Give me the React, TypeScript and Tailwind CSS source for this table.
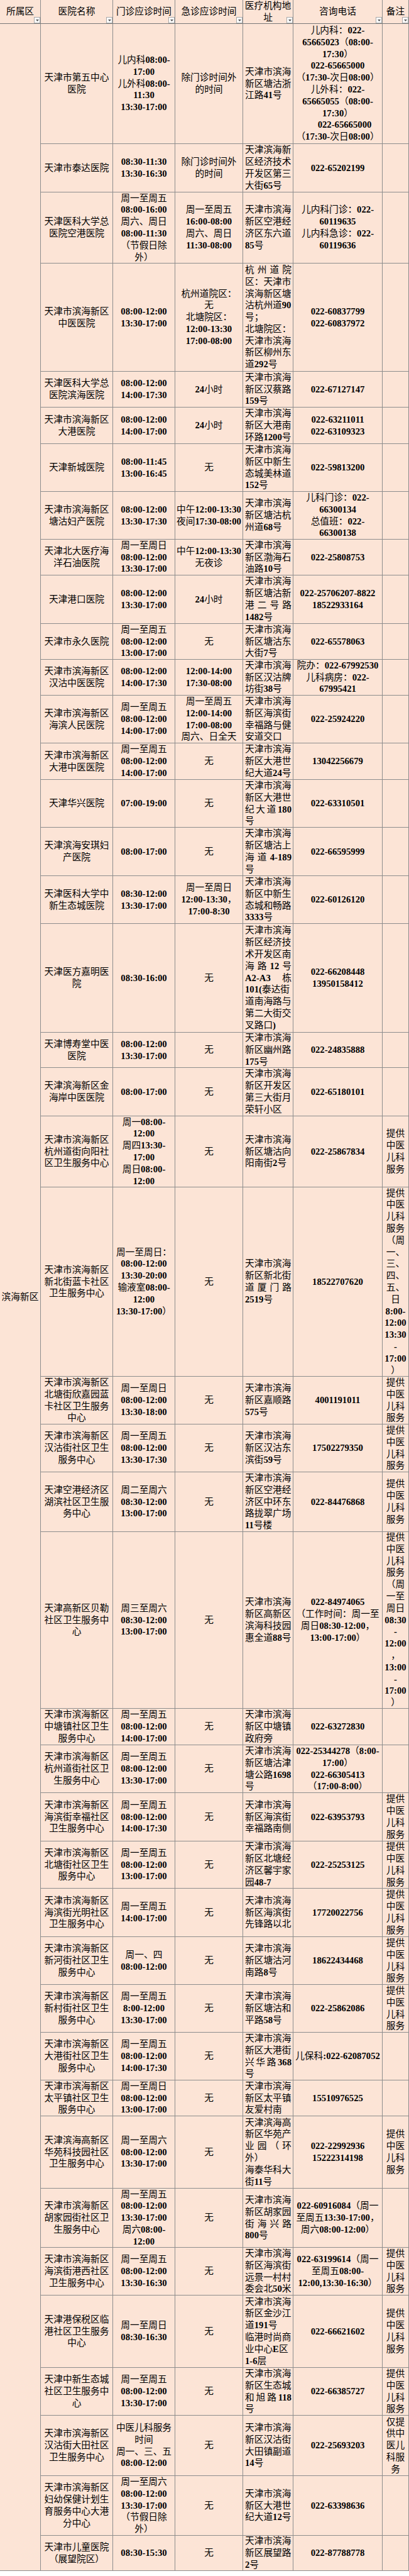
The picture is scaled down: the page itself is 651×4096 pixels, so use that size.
import React from "react";

type Row = {
  h: string;
  name: string[];
  op: string[];
  em: string[];
  addr: string[];
  tel: string[];
  note?: string[];
};

const TCM = ["提供", "中医", "儿科", "服务"];

const rows: Row[] = [
  {
    h: "h-[191px]",
    name: ["天津市第五中心", "医院"],
    op: ["儿内科08:00-", "17:00", "儿外科08:00-", "11:30", "13:30-17:00"],
    em: ["除门诊时间外", "的时间"],
    addr: ["天津市滨海", "新区塘沽浙", "江路41号"],
    tel: ["儿内科：022-", "65665023（08:00-", "17:30）", "022-65665000", "（17:30-次日08:00）", "儿外科：022-", "65665055（08:00-", "17:30）", "~022-65665000", "（17:30-次日08:00）"],
  },
  {
    h: "h-[77px]",
    name: ["天津市泰达医院"],
    op: ["08:30-11:30", "13:30-16:30"],
    em: ["除门诊时间外", "的时间"],
    addr: ["天津滨海新", "区经济技术", "开发区第三", "大街65号"],
    tel: ["022-65202199"],
  },
  {
    h: "h-[113px]",
    name: ["天津医科大学总", "医院空港医院"],
    op: ["周一至周五", "08:00-16:00", "周六、周日", "08:00-11:30", "（节假日除", "外）"],
    em: ["周一至周五", "16:00-08:00", "周六、周日", "11:30-08:00"],
    addr: ["天津市滨海", "新区空港经", "济区东六道", "85号"],
    tel: ["儿内科门诊：022-", "60119635", "儿内科急诊：022-", "60119636"],
  },
  {
    h: "h-[172px]",
    name: ["天津市滨海新区", "中医医院"],
    op: ["08:00-12:00", "13:30-17:00"],
    em: ["杭州道院区：", "无", "北塘院区：", "12:00-13:30", "17:00-08:00"],
    addr: ["杭|州|道|院", "区：天津市", "滨海新区塘", "沽杭州道90", "号；", "北塘院区：", "天津市滨海", "新区柳州东", "道292号"],
    tel: ["022-60837799", "022-60837972"],
  },
  {
    h: "h-[57px]",
    name: ["天津医科大学总", "医院滨海医院"],
    op: ["08:00-12:00", "14:00-17:30"],
    em: ["24小时"],
    addr: ["天津市滨海", "新区汉蔡路", "159号"],
    tel: ["022-67127147"],
  },
  {
    h: "h-[58px]",
    name: ["天津市滨海新区", "大港医院"],
    op: ["08:00-12:00", "14:00-17:00"],
    em: ["24小时"],
    addr: ["天津市滨海", "新区大港南", "环路1200号"],
    tel: ["022-63211011", "022-63109323"],
  },
  {
    h: "h-[76px]",
    name: ["天津新城医院"],
    op: ["08:00-11:45", "13:00-16:45"],
    em: ["无"],
    addr: ["天津市滨海", "新区中新生", "态城美林道", "152号"],
    tel: ["022-59813200"],
  },
  {
    h: "h-[76px]",
    name: ["天津市滨海新区", "塘沽妇产医院"],
    op: ["08:00-12:00", "13:30-17:30"],
    em: ["中午12:00-13:30", "夜间17:30-08:00"],
    addr: ["天津市滨海", "新区塘沽杭", "州道68号"],
    tel: ["儿科门诊：022-", "66300134", "总值班：022-", "66300138"],
  },
  {
    h: "h-[57px]",
    name: ["天津北大医疗海", "洋石油医院"],
    op: ["周一至周日", "08:00-12:00", "13:30-17:00"],
    em: ["中午12:00-13:30", "无夜诊"],
    addr: ["天津市滨海", "新区渤海石", "油路10号"],
    tel: ["022-25808753"],
  },
  {
    h: "h-[77px]",
    name: ["天津港口医院"],
    op: ["08:00-12:00", "13:30-17:00"],
    em: ["24小时"],
    addr: ["天津市滨海", "新区塘沽新", "港|二|号|路", "1482号"],
    tel: ["022-25706207-8822", "18522933164"],
  },
  {
    h: "h-[57px]",
    name: ["天津市永久医院"],
    op: ["周一至周五", "08:00-12:00", "13:00-17:00"],
    em: ["无"],
    addr: ["天津市滨海", "新区塘沽东", "大街7号"],
    tel: ["022-65578063"],
  },
  {
    h: "h-[57px]",
    name: ["天津市滨海新区", "汉沽中医医院"],
    op: ["08:00-12:00", "14:00-17:30"],
    em: ["12:00-14:00", "17:30-08:00"],
    addr: ["天津市滨海", "新区汉沽牌", "坊街38号"],
    tel: ["院办：022-67992530", "儿科病房：022-", "67995421"],
  },
  {
    h: "h-[76px]",
    name: ["天津市滨海新区", "海滨人民医院"],
    op: ["周一至周五", "08:00-12:00", "14:00-17:00"],
    em: ["周一至周五", "12:00-14:00", "17:00-08:00", "周六、日全天"],
    addr: ["天津市滨海", "新区海滨街", "幸福路与健", "安道交口"],
    tel: ["022-25924220"],
  },
  {
    h: "h-[58px]",
    name: ["天津市滨海新区", "大港中医医院"],
    op: ["周一至周五", "08:00-12:00", "14:00-17:00"],
    em: ["无"],
    addr: ["天津市滨海", "新区大港世", "纪大道24号"],
    tel: ["13042256679"],
  },
  {
    h: "h-[76px]",
    name: ["天津华兴医院"],
    op: ["07:00-19:00"],
    em: ["无"],
    addr: ["天津市滨海", "新区大港世", "纪|大|道|180", "号"],
    tel: ["022-63310501"],
  },
  {
    h: "h-[77px]",
    name: ["天津滨海安琪妇", "产医院"],
    op: ["08:00-17:00"],
    em: ["无"],
    addr: ["天津市滨海", "新区塘沽上", "海|道|4-189", "号"],
    tel: ["022-66595999"],
  },
  {
    h: "h-[76px]",
    name: ["天津医科大学中", "新生态城医院"],
    op: ["08:30-12:00", "13:30-17:00"],
    em: ["周一至周日", "12:00-13:30，", "17:00-8:30"],
    addr: ["天津市滨海", "新区中新生", "态城和畅路", "3333号"],
    tel: ["022-60126120"],
  },
  {
    h: "h-[173px]",
    name: ["天津医方嘉明医", "院"],
    op: ["08:30-16:00"],
    em: ["无"],
    addr: ["天津市滨海", "新区经济技", "术开发区南", "海|路|12|号", "A2-A3|栋", "101(泰达街", "道南海路与", "第二大街交", "叉路口)"],
    tel: ["022-66208448", "13950158412"],
  },
  {
    h: "h-[56px]",
    name: ["天津博寿堂中医", "医院"],
    op: ["08:00-12:00", "13:30-17:00"],
    em: ["无"],
    addr: ["天津市滨海", "新区幽州路", "175号"],
    tel: ["022-24835888"],
  },
  {
    h: "h-[77px]",
    name: ["天津滨海新区金", "海岸中医医院"],
    op: ["08:00-17:00"],
    em: ["无"],
    addr: ["天津市滨海", "新区开发区", "第三大街月", "荣轩小区"],
    tel: ["022-65180101"],
  },
  {
    h: "h-[113px]",
    name: ["天津市滨海新区", "杭州道街向阳社", "区卫生服务中心"],
    op: ["周一08:00-", "12:00", "周四13:30-", "17:00", "周日08:00-", "12:00"],
    em: ["无"],
    addr: ["天津市滨海", "新区塘沽向", "阳南街2号"],
    tel: ["022-25867834"],
    note: TCM,
  },
  {
    h: "h-[301px]",
    name: ["天津市滨海新区", "新北街蓝卡社区", "卫生服务中心"],
    op: ["周一至周日：", "08:00-12:00", "13:30-20:00", "输液室08:00-", "12:00", "13:30-17:00）"],
    em: ["无"],
    addr: ["天津市滨海", "新区新北街", "道|厦|门|路", "2519号"],
    tel: ["18522707620"],
    note: ["提供", "中医", "儿科", "服务", "（周", "一、", "三、", "四、", "五、", "日", "8:00-", "12:00", "13:30", "-", "17:00", "）"],
  },
  {
    h: "h-[76px]",
    name: ["天津市滨海新区", "北塘街欣嘉园蓝", "卡社区卫生服务", "中心"],
    op: ["周一至周日", "08:00-12:00", "13:30-18:00"],
    em: ["无"],
    addr: ["天津市滨海", "新区嘉顺路", "575号"],
    tel: ["4001191011"],
    note: TCM,
  },
  {
    h: "h-[76px]",
    name: ["天津市滨海新区", "汉沽街社区卫生", "服务中心"],
    op: ["周一至周五", "08:00-12:00", "13:30-17:30"],
    em: ["无"],
    addr: ["天津市滨海", "新区汉沽东", "滨街59号"],
    tel: ["17502279350"],
    note: TCM,
  },
  {
    h: "h-[95px]",
    name: ["天津空港经济区", "湖滨社区卫生服", "务中心"],
    op: ["周二至周六", "08:30-12:00", "13:00-17:00"],
    em: ["无"],
    addr: ["天津市滨海", "新区空港经", "济区中环东", "路拢翠广场", "11号楼"],
    tel: ["022-84476868"],
    note: TCM,
  },
  {
    h: "h-[281px]",
    name: ["天津高新区贝勒", "社区卫生服务中", "心"],
    op: ["周三至周六", "08:30-12:00", "13:00-17:00"],
    em: ["无"],
    addr: ["天津市滨海", "新区高新区", "滨海科技园", "惠全道88号"],
    tel: ["022-84974065", "（工作时间：周一至", "周日08:30-12:00，", "13:00-17:00）"],
    note: ["提供", "中医", "儿科", "服务", "（周", "一至", "周日", "08:30", "-", "12:00", "，", "13:00", "-", "17:00", "）"],
  },
  {
    h: "h-[58px]",
    name: ["天津市滨海新区", "中塘镇社区卫生", "服务中心"],
    op: ["周一至周五", "08:00-12:00", "14:00-17:00"],
    em: ["无"],
    addr: ["天津市滨海", "新区中塘镇", "政府旁"],
    tel: ["022-63272830"],
  },
  {
    h: "h-[76px]",
    name: ["天津市滨海新区", "杭州道街社区卫", "生服务中心"],
    op: ["周一至周五", "08:00-12:00", "13:30-17:00"],
    em: ["无"],
    addr: ["天津市滨海", "新区塘沽津", "塘公路1698", "号"],
    tel: ["022-25344278（8:00-", "17:00）", "022-66305413", "（17:00-8:00）"],
  },
  {
    h: "h-[77px]",
    name: ["天津市滨海新区", "海滨街幸福社区", "卫生服务中心"],
    op: ["周一至周五", "08:00-12:00", "14:00-17:30"],
    em: ["无"],
    addr: ["天津市滨海", "新区海滨街", "幸福路南侧"],
    tel: ["022-63953793"],
    note: TCM,
  },
  {
    h: "h-[75px]",
    name: ["天津市滨海新区", "北塘街社区卫生", "服务中心"],
    op: ["周一至周五", "08:00-12:00", "13:00-17:00"],
    em: ["无"],
    addr: ["天津市滨海", "新区北塘经", "济区馨宇家", "园48-7"],
    tel: ["022-25253125"],
    note: TCM,
  },
  {
    h: "h-[77px]",
    name: ["天津市滨海新区", "海滨街光明社区", "卫生服务中心"],
    op: ["周一至周五", "14:00-17:00"],
    em: ["无"],
    addr: ["天津市滨海", "新区海滨街", "先锋路以北"],
    tel: ["17720022756"],
    note: TCM,
  },
  {
    h: "h-[76px]",
    name: ["天津市滨海新区", "新河街社区卫生", "服务中心"],
    op: ["周一、四", "08:00-12:00"],
    em: ["无"],
    addr: ["天津市滨海", "新区塘沽河", "南路8号"],
    tel: ["18622434468"],
    note: TCM,
  },
  {
    h: "h-[76px]",
    name: ["天津市滨海新区", "新村街社区卫生", "服务中心"],
    op: ["周一至周五", "8:00-12:00", "13:30-17:00"],
    em: ["无"],
    addr: ["天津市滨海", "新区塘沽和", "平路58号"],
    tel: ["022-25862086"],
    note: TCM,
  },
  {
    h: "h-[76px]",
    name: ["天津市滨海新区", "大港街社区卫生", "服务中心"],
    op: ["周一至周五", "08:00-12:00", "14:00-17:30"],
    em: ["无"],
    addr: ["天津市滨海", "新区大港街", "兴|华|路|368", "号"],
    tel: ["儿保科:022-62087052"],
  },
  {
    h: "h-[57px]",
    name: ["天津市滨海新区", "太平镇社区卫生", "服务中心"],
    op: ["周一至周日", "08:00-12:00", "13:00-17:00"],
    em: ["无"],
    addr: ["天津市滨海", "新区太平镇", "友爱村南"],
    tel: ["15510976525"],
  },
  {
    h: "h-[115px]",
    name: ["天津滨海高新区", "华苑科技园社区", "卫生服务中心"],
    op: ["周一至周六", "08:00-12:00", "13:30-17:00"],
    em: ["无"],
    addr: ["天津滨海高", "新区华苑产", "业|园|（|环", "外）", "海泰华科大", "街11号"],
    tel: ["022-22992936", "15222314198"],
    note: TCM,
  },
  {
    h: "h-[94px]",
    name: ["天津市滨海新区", "胡家园街社区卫", "生服务中心"],
    op: ["周一至周五", "08:00-12:00", "13:30-17:00", "周六08:00-", "12:00"],
    em: ["无"],
    addr: ["天津市滨海", "新区胡家园", "街|海|兴|路", "800号"],
    tel: ["022-60916084（周一", "至周五13:30-17:00，", "周六08:00-12:00）"],
  },
  {
    h: "h-[76px]",
    name: ["天津市滨海新区", "海滨街港西社区", "卫生服务中心"],
    op: ["周一至周五", "08:00-12:00", "13:30-16:30"],
    em: ["无"],
    addr: ["天津市滨海", "新区海滨街", "远景一村村", "委会北50米"],
    tel: ["022-63199614（周一", "至周五08:00-", "12:00,13:30-16:30）"],
    note: TCM,
  },
  {
    h: "h-[115px]",
    name: ["天津港保税区临", "港社区卫生服务", "中心"],
    op: ["周一至周日", "08:30-16:30"],
    em: ["无"],
    addr: ["天津市滨海", "新区金沙江", "道191号", "临港时尚商", "业中心E区", "1-6层"],
    tel: ["022-66621602"],
    note: TCM,
  },
  {
    h: "h-[76px]",
    name: ["天津中新生态城", "社区卫生服务中", "心"],
    op: ["周一至周五", "08:00-12:00", "13:30-17:00"],
    em: ["无"],
    addr: ["天津市滨海", "新区生态城", "和|旭|路|118", "号"],
    tel: ["022-66385727"],
    note: TCM,
  },
  {
    h: "h-[96px]",
    name: ["天津市滨海新区", "汉沽街大田社区", "卫生服务中心"],
    op: ["中医儿科服务", "时间", "周一、三、五", "08:00-12:00"],
    em: ["无"],
    addr: ["天津市滨海", "新区汉沽街", "大田镇副道", "14号"],
    tel: ["022-25693203"],
    note: ["仅提", "供中", "医儿", "科服", "务"],
  },
  {
    h: "h-[95px]",
    name: ["天津市滨海新区", "妇幼保健计划生", "育服务中心大港", "分中心"],
    op: ["周一至周六", "08:00-12:00", "13:30-17:00", "（节假日除", "外）"],
    em: ["无"],
    addr: ["天津市滨海", "新区大港世", "纪大道12号"],
    tel: ["022-63398636"],
  },
  {
    h: "h-[56px]",
    name: ["天津市儿童医院", "（展望院区）"],
    op: ["08:30-15:30"],
    em: ["无"],
    addr: ["天津市滨海", "新区展望路", "2号"],
    tel: ["022-87788778"],
  },
];

function Rich({ t }: { t: string }) {
  const parts = t.split(/([\x21-\x7E]+)/);
  return (
    <>
      {parts.map((p, i) =>
        i % 2 === 1 ? (
          <span key={i} className="font-bold">
            {p}
          </span>
        ) : (
          <React.Fragment key={i}>{p}</React.Fragment>
        )
      )}
    </>
  );
}

function Line({ t }: { t: string }) {
  if (t.startsWith("~")) {
    return (
      <div className="whitespace-nowrap pl-[22px]">
        <Rich t={t.slice(1)} />
      </div>
    );
  }
  if (t.includes("|")) {
    return (
      <div className="flex justify-between whitespace-nowrap">
        {t.split("|").map((p, i) => (
          <span key={i}>
            <Rich t={p} />
          </span>
        ))}
      </div>
    );
  }
  return (
    <div className="whitespace-nowrap">
      <Rich t={t} />
    </div>
  );
}

function Cell({ lines, w, left }: { lines: string[]; w: string; left?: boolean }) {
  return (
    <div
      className={`${w} shrink-0 h-full border-r border-[#8d8d8d] flex flex-col justify-center overflow-hidden ${
        left ? "items-stretch text-left pl-[3px] pr-[2px]" : "items-center text-center"
      }`}
    >
      {lines.map((l, i) => (
        <Line key={i} t={l} />
      ))}
    </div>
  );
}

function Filter() {
  return (
    <div className="absolute right-0 bottom-0 w-[10px] h-[10px] bg-white border border-[#a9a9a9] flex items-center justify-center">
      <svg width="5" height="3" viewBox="0 0 5 3">
        <path d="M0 0 L5 0 L2.5 3 Z" fill="#555" />
      </svg>
    </div>
  );
}

function HeadCell({ lines, w }: { lines: string[]; w: string }) {
  return (
    <div className={`${w} shrink-0 h-full relative border-r border-[#8d8d8d] flex flex-col items-center justify-center text-center`}>
      {lines.map((l, i) => (
        <div key={i} className="whitespace-nowrap">
          {l}
        </div>
      ))}
      <Filter />
    </div>
  );
}

export default function App() {
  return (
    <div className="w-[651px] bg-[#fce4d6] text-black font-['Liberation_Serif','Noto_Sans_CJK_SC',serif] text-[14.7px] leading-[18.8px]">
      <div className="flex h-[38px] border-b border-[#777]">
        <HeadCell lines={["所属区"]} w="w-[65px]" />
        <HeadCell lines={["医院名称"]} w="w-[115px]" />
        <HeadCell lines={["门诊应诊时间"]} w="w-[99px]" />
        <HeadCell lines={["急诊应诊时间"]} w="w-[108px]" />
        <HeadCell lines={["医疗机构地", "址"]} w="w-[80px]" />
        <HeadCell lines={["咨询电话"]} w="w-[142px]" />
        <HeadCell lines={["备注"]} w="w-[42px]" />
      </div>
      <div className="flex">
        <div className="w-[65px] shrink-0 border-r border-b border-[#8d8d8d] flex items-center justify-center">
          <div className="whitespace-nowrap">滨海新区</div>
        </div>
        <div className="flex flex-col">
          {rows.map((r, i) => (
            <div key={i} className={`flex ${r.h} border-b border-[#8d8d8d]`}>
              <Cell lines={r.name} w="w-[115px]" />
              <Cell lines={r.op} w="w-[99px]" />
              <Cell lines={r.em} w="w-[108px]" />
              <Cell lines={r.addr} w="w-[80px]" left />
              <Cell lines={r.tel} w="w-[142px]" />
              <Cell lines={r.note ?? []} w="w-[42px]" />
            </div>
          ))}
        </div>
      </div>
    </div>
  );
}
